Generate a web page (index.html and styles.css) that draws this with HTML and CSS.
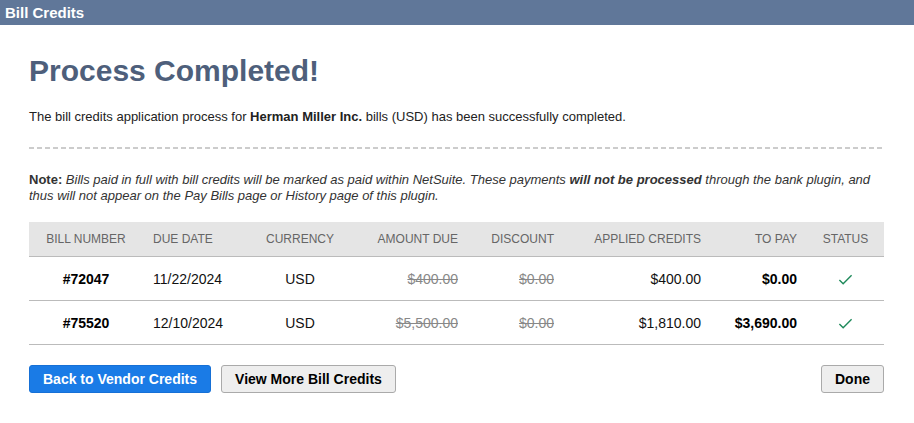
FILE: index.html
```html
<!DOCTYPE html>
<html lang="en">
<head>
    <meta charset="UTF-8">
    <meta name="viewport" content="width=device-width, initial-scale=1.0">
    <title>Bill Credits</title>
    <link rel="stylesheet" href="styles.css">
</head>
<body>
    <div class="title-bar">Bill Credits</div>

    <div class="container">
        <h1>Process Completed!</h1>
        <p class="summary">The bill credits application process for <b>Herman Miller Inc.</b> bills (USD) has been successfully completed.</p>

        <div class="divider"></div>

        <p class="note"><b>Note:</b> <i>Bills paid in full with bill credits will be marked as paid within NetSuite. These payments <b>will not be processed</b> through the bank plugin, and thus will not appear on the Pay Bills page or History page of this plugin.</i></p>

        <table class="bills">
            <colgroup>
                <col style="width: 114px">
                <col style="width: 107px">
                <col style="width: 100px">
                <col style="width: 118px">
                <col style="width: 96px">
                <col style="width: 147px">
                <col style="width: 96px">
                <col style="width: 77px">
            </colgroup>
            <thead>
                <tr>
                    <th class="center">Bill Number</th>
                    <th class="left">Due Date</th>
                    <th class="center">Currency</th>
                    <th class="right">Amount Due</th>
                    <th class="right">Discount</th>
                    <th class="right">Applied Credits</th>
                    <th class="right">To Pay</th>
                    <th class="center">Status</th>
                </tr>
            </thead>
            <tbody>
                <tr>
                    <td class="center bold">#72047</td>
                    <td class="left">11/22/2024</td>
                    <td class="center">USD</td>
                    <td class="right struck">$400.00</td>
                    <td class="right struck">$0.00</td>
                    <td class="right">$400.00</td>
                    <td class="right bold">$0.00</td>
                    <td class="center"><svg class="check" viewBox="0 0 16 16"><path d="M1.5 8.5l4 4 9-9" fill="none" stroke="currentColor" stroke-width="1.5"/></svg></td>
                </tr>
                <tr>
                    <td class="center bold">#75520</td>
                    <td class="left">12/10/2024</td>
                    <td class="center">USD</td>
                    <td class="right struck">$5,500.00</td>
                    <td class="right struck">$0.00</td>
                    <td class="right">$1,810.00</td>
                    <td class="right bold">$3,690.00</td>
                    <td class="center"><svg class="check" viewBox="0 0 16 16"><path d="M1.5 8.5l4 4 9-9" fill="none" stroke="currentColor" stroke-width="1.5"/></svg></td>
                </tr>
            </tbody>
        </table>

        <div class="actions">
            <button class="btn btn-primary">Back to Vendor Credits</button>
            <button class="btn">View More Bill Credits</button>
            <button class="btn btn-done">Done</button>
        </div>
    </div>
</body>
</html>
```

FILE: styles.css
```css
body {
    font-family: 'Liberation Sans', Arial, sans-serif;
    margin: 0;
    background: #ffffff;
    color: #222222;
}

.title-bar {
    height: 25px;
    line-height: 25px;
    padding: 0 5px;
    background-color: #607799;
    color: #ffffff;
    font-size: 15px;
    font-weight: 700;
}

.container {
    padding: 0 30px 0 29px;
}

h1 {
    font-size: 30px;
    line-height: 36px;
    font-weight: 700;
    color: #4e5f7b;
    margin: 28px 0 20px 0;
}

.summary {
    font-size: 13px;
    line-height: 16px;
    margin: 0 0 22px 0;
}

.divider {
    height: 2px;
    background: repeating-linear-gradient(90deg, #cccccc 0, #cccccc 5px, transparent 5px, transparent 8px);
}

.note {
    font-size: 13px;
    line-height: 16px;
    color: #333333;
    margin: 23px 0 18px 0;
}

.bills {
    width: 100%;
    table-layout: fixed;
    border-collapse: collapse;
}

.bills th {
    height: 34px;
    padding: 0 10px;
    background-color: #e5e5e5;
    color: #666666;
    font-size: 12px;
    font-weight: 400;
    text-transform: uppercase;
    white-space: nowrap;
    border-bottom: 1px solid #bbbbbb;
}

.bills td {
    height: 43px;
    padding: 0 10px;
    font-size: 14px;
    color: #111111;
    border-bottom: 1px solid #bbbbbb;
}

.bills .left { text-align: left; }
.bills .center { text-align: center; }
.bills .right { text-align: right; }
.bills .bold { font-weight: 700; color: #000000; }

.bills .struck {
    color: #888888;
    text-decoration: line-through;
}

.check {
    width: 15px;
    height: 15px;
    color: #1f8a5b;
    vertical-align: middle;
}

.actions {
    display: flex;
    gap: 10px;
    margin-top: 20px;
}

.btn {
    height: 28px;
    padding: 0 13px;
    border-radius: 3px;
    border: 1px solid #aaaaaa;
    background-color: #eeeeee;
    color: #000000;
    font-family: 'Liberation Sans', Arial, sans-serif;
    font-size: 14px;
    font-weight: 700;
    cursor: pointer;
}

.btn-primary {
    background-color: #1a7be6;
    border-color: #1670d6;
    color: #ffffff;
}

.btn-done {
    margin-left: auto;
}
```
